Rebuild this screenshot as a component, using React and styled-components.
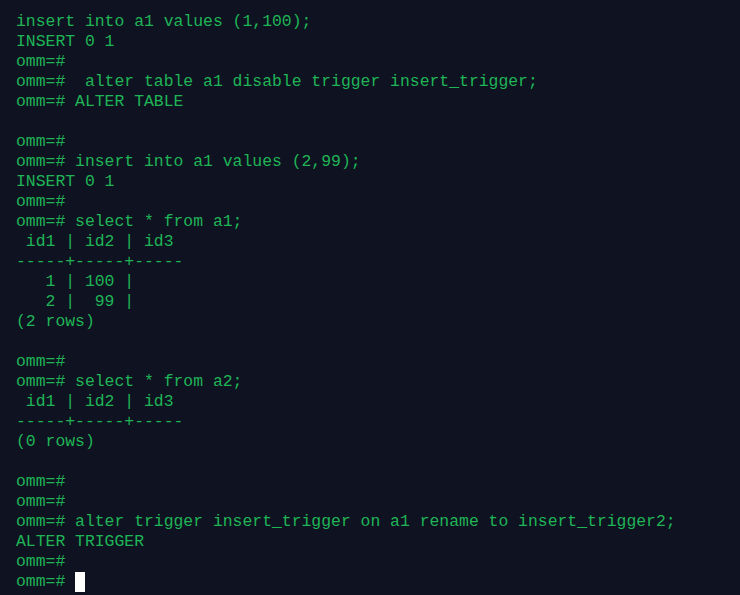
import React from 'react';
import styled, { createGlobalStyle } from 'styled-components';

const GlobalStyle = createGlobalStyle`
  html, body {
    margin: 0;
    padding: 0;
    background-color: #0f1220;
  }
`;

const Terminal = styled.div`
  width: 740px;
  height: 595px;
  box-sizing: border-box;
  padding: 12px 0 0 16px;
  background-color: #0f1220;
  overflow: hidden;
  display: flex;
  flex-direction: column;
`;

const Line = styled.div`
  height: 20px;
  line-height: 20px;
  font-family: "Courier New", "Nimbus Mono PS", "FreeMono", "Liberation Mono", monospace;
  font-size: 16.42px;
  color: #1fb557;
  white-space: pre;
`;

const Cursor = styled.span`
  display: inline-block;
  width: 10px;
  height: 20px;
  vertical-align: top;
  background-color: #ffffff;
`;

const lines = [
  'insert into a1 values (1,100);',
  'INSERT 0 1',
  'omm=#',
  'omm=#  alter table a1 disable trigger insert_trigger;',
  'omm=# ALTER TABLE',
  '',
  'omm=#',
  'omm=# insert into a1 values (2,99);',
  'INSERT 0 1',
  'omm=#',
  'omm=# select * from a1;',
  ' id1 | id2 | id3',
  '-----+-----+-----',
  '   1 | 100 |',
  '   2 |  99 |',
  '(2 rows)',
  '',
  'omm=#',
  'omm=# select * from a2;',
  ' id1 | id2 | id3',
  '-----+-----+-----',
  '(0 rows)',
  '',
  'omm=#',
  'omm=#',
  'omm=# alter trigger insert_trigger on a1 rename to insert_trigger2;',
  'ALTER TRIGGER',
  'omm=#',
];

function App() {
  return (
    <>
      <GlobalStyle />
      <Terminal>
        {lines.map((text, i) => (
          <Line key={i}>{text}</Line>
        ))}
        <Line>
          {'omm=# '}
          <Cursor />
        </Line>
      </Terminal>
    </>
  );
}

export default App;
